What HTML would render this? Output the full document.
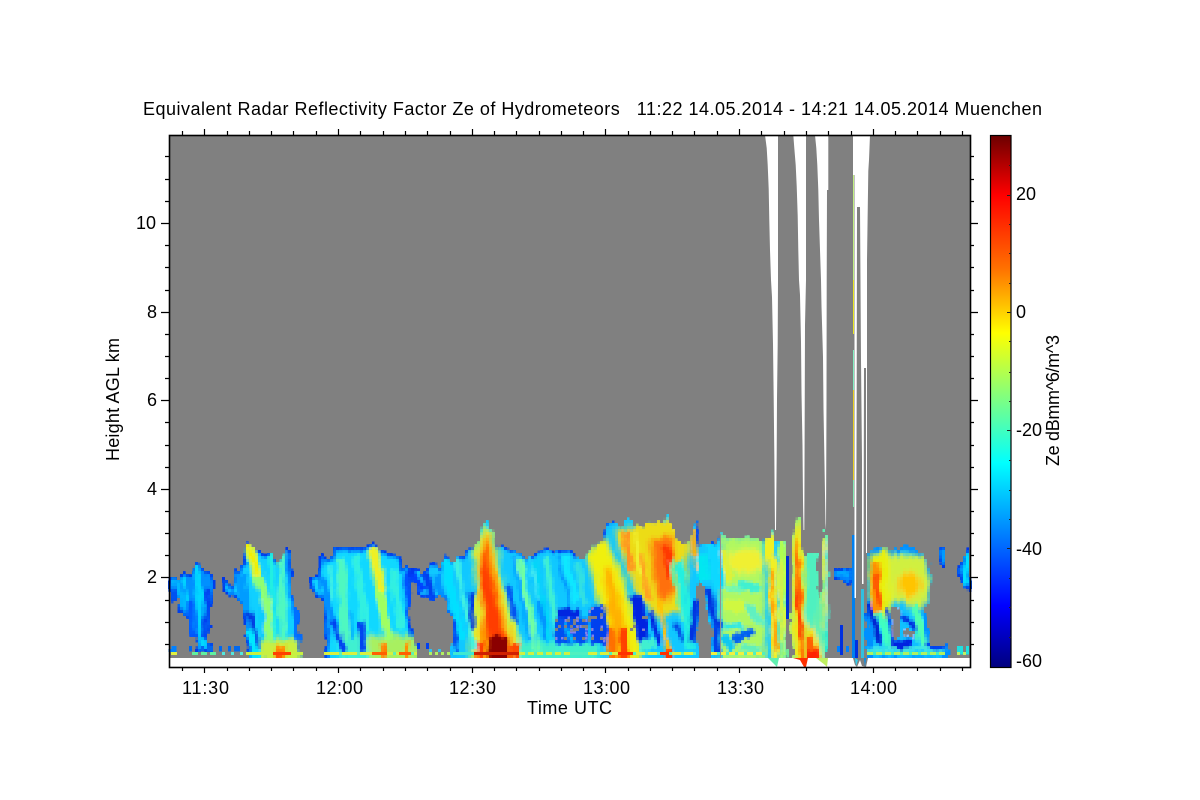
<!DOCTYPE html>
<html><head><meta charset="utf-8"><title>Radar</title>
<style>
html,body{margin:0;padding:0;background:#fff;width:1200px;height:800px;overflow:hidden}
svg{display:block}
text{font-family:"Liberation Sans",sans-serif;font-size:18px;fill:#000;white-space:pre}
</style></head><body>
<svg width="1200" height="800" viewBox="0 0 1200 800" xmlns="http://www.w3.org/2000/svg">
<defs>
<linearGradient id="jet" gradientUnits="userSpaceOnUse" x1="0" y1="135" x2="0" y2="667">
<stop offset="0" stop-color="#6b0000"/><stop offset=".113" stop-color="#ff0000"/><stop offset=".25" stop-color="#ff7000"/><stop offset=".372" stop-color="#ffff00"/><stop offset=".494" stop-color="#80ff80"/><stop offset=".617" stop-color="#00ffff"/><stop offset=".75" stop-color="#0080ff"/><stop offset=".885" stop-color="#0000ff"/><stop offset="1" stop-color="#00007f"/>
</linearGradient>
<filter id="b" filterUnits="userSpaceOnUse" x="160" y="500" width="820" height="180"><feGaussianBlur stdDeviation="2.6"/></filter>
<filter id="b2" filterUnits="userSpaceOnUse" x="160" y="500" width="820" height="180"><feGaussianBlur stdDeviation="1.1"/></filter>
<filter id="pix" filterUnits="userSpaceOnUse" primitiveUnits="userSpaceOnUse" x="165" y="505" width="810" height="170" color-interpolation-filters="sRGB">
<feTurbulence type="fractalNoise" baseFrequency="0.16 0.05" numOctaves="2" seed="4" result="n"/>
<feDisplacementMap in="SourceGraphic" in2="n" scale="9" xChannelSelector="R" yChannelSelector="G" result="d"/>
<feFlood x="166" y="506" width="1" height="1" flood-color="#000"/>
<feComposite x="165" y="505" width="3" height="3"/>
<feTile x="165" y="505" width="810" height="170" result="g"/>
<feComposite in="d" in2="g" operator="in"/>
<feMorphology operator="dilate" radius="1"/>
</filter>
<filter id="pix2" filterUnits="userSpaceOnUse" primitiveUnits="userSpaceOnUse" x="165" y="505" width="810" height="170" color-interpolation-filters="sRGB">
<feFlood x="166" y="506" width="1" height="1" flood-color="#000"/>
<feComposite x="165" y="505" width="3" height="3"/>
<feTile x="165" y="505" width="810" height="170" result="g"/>
<feComposite in="SourceGraphic" in2="g" operator="in"/>
<feMorphology operator="dilate" radius="1"/>
</filter>
<path id="a" d="M170 572L177 580L183 572L190 575L195 562L202 565L205 568L215 580L215 590L210 607L210 627L207 638L213 647L213 653L193 653L195 638L190 627L188 617L180 617L180 600L173 602L170 587Z"/>
<path id="c" d="M220 592L223 577L232 585L238 565L243 562L248 543L252 545L257 552L268 552L275 560L280 562L287 543L290 553L292 577L293 597L298 617L300 643L303 653L303 662L247 662L245 637L245 617L238 600L230 595Z"/>
<path id="d" d="M309 577L317 577L322 557L332 557L335 547L360 548L373 543L380 552L400 555L402 567L413 568L410 607L412 627L418 653L418 662L326 662L325 623L323 603L315 593L309 585Z"/>
<path id="m" d="M408 570L423 572L435 562L440 570L445 553L450 562L462 557L468 550L477 548L480 530L487 520L492 530L495 547L510 550L520 550L525 558L547 550L558 550L567 548L577 557L582 560L593 547L603 540L607 522L615 522L620 530L628 516L633 523L643 528L650 522L663 522L667 513L672 530L678 543L690 542L693 527L697 520L698 547L710 545L722 534L727 538L747 538L763 540L768 540L772 530L775 540L786 542L786 662L712 662L712 640L709 620L705 590L700 580L698 580L697 662L453 662L452 617L443 595L430 600L420 593Z"/>
<path id="p2" d="M792 600L792 540L797 517L800 517L803 560L808 553L817 553L818 600L822 620L822 550L825 530L827 530L828 640L827 662L806 662L792 662Z"/>
<path id="f" d="M867 575L868 553L878 545L887 550L897 550L908 545L918 552L930 562L932 580L930 600L927 610L927 643L947 646L947 662L867 662Z"/>
<path id="s1" d="M835 568L853 568L853 580L848 583L842 582L835 578Z"/>
<path id="s2" d="M938 553L943 545L947 555L946 568L942 568L938 560Z"/>
<path id="s3" d="M958 570L966 552L970 550L970 590L966 590L960 578Z"/>
<clipPath id="cl"><use href="#a"/><use href="#c"/><use href="#d"/><use href="#m"/><use href="#p2"/><use href="#f"/><use href="#s1"/><use href="#s2"/><use href="#s3"/></clipPath>
</defs>

<rect x="169" y="135" width="801" height="523" fill="#808080"/>

<g filter="url(#pix)">
<g clip-path="url(#cl)">
<use href="#a" fill="#0090ff"/><use href="#c" fill="#10d0ff"/><use href="#d" fill="#10d8ff"/><use href="#m" fill="#10c8ff"/><use href="#p2" fill="#60f0b0"/><use href="#f" fill="#10c0ff"/><use href="#s1" fill="#0070ff"/><use href="#s2" fill="#0070ff"/><use href="#s3" fill="#0090ff"/>
<!-- soft edges -->
<g filter="url(#b2)" fill="none">
<g stroke="#0090ff" stroke-width="9"><use href="#a"/><use href="#c"/><use href="#d"/><use href="#f"/><use href="#s1"/><use href="#s2"/><use href="#s3"/></g>
<g stroke="#0030e8" stroke-width="4"><use href="#a"/><use href="#c"/><use href="#d"/><use href="#s1"/><use href="#s2"/><use href="#s3"/></g>
<path d="M408 570L423 572L435 562L440 570L445 553L450 562L462 557L468 550L477 548M452 617L443 595L430 600L420 593L408 570M495 547L510 550L520 550L525 558L547 550L558 550L567 548L577 557M593 547L603 540L607 522L615 522M643 528L650 522L663 522M697 520L698 547M710 545L722 534M763 540L768 540" stroke="#0038f0" stroke-width="4"/>
</g>
<!-- large soft regions -->
<g filter="url(#b)">
<path d="M262 638L298 638L304 662L258 662Z" fill="#c8f040"/>
<path d="M366 636L418 636L422 662L362 662Z" fill="#a8f060"/>
<path d="M340 634L366 634L370 662L338 662Z" fill="#40f0d0"/>
<path d="M474 552L484 525L492 530L500 570L510 610L522 645L520 662L470 662L472 620L476 585Z" fill="#d8ff30"/>
<path d="M478 560L486 530L490 535L497 575L505 615L514 640L514 662L474 662L480 625L479 590Z" fill="#ff9800"/>
<path d="M480 570L487 538L491 570L503 625L510 640L488 640L482 610Z" fill="#ff3c00"/>
<path d="M518 642L600 642L600 662L518 662Z" fill="#40f0c8"/>
<path d="M586 555L604 535L624 578L642 650L640 662L612 662L600 605L592 575Z" fill="#f0f010"/>
<path d="M603 565L612 570L622 610L632 662L618 662L608 610Z" fill="#ffb000"/>
<path d="M614 532L640 522L675 518L690 545L682 612L656 618L636 592Z" fill="#ecdc18"/>
<path d="M650 540L673 535L677 590L662 605L654 582Z" fill="#ff7010"/>
<path d="M721 536L764 538L766 660L720 660Z" fill="#b0f860"/>
<ellipse cx="745" cy="561" rx="18" ry="12" fill="#f0f030"/>
<path d="M792 660L792 540L797 517L801 520L804 560L805 667L800 660Z" fill="#f8e810"/>
<path d="M806 612L818 610L828 655L828 667L806 660Z" fill="#60f0b0"/>
<path d="M806 625L814 625L824 660L806 660Z" fill="#f8e010"/>
<path d="M868 556L890 548L892 618L880 620L870 600Z" fill="#e8f010"/>
<path d="M890 555L925 555L932 580L926 610L890 600Z" fill="#d0f040"/>
<ellipse cx="909" cy="585" rx="12" ry="13" fill="#ffc400"/>
</g>
<g filter="url(#b2)" fill="none">
<!-- cloud A -->
<path d="M197 565L203 650" stroke="#00d8ff" stroke-width="6"/>
<path d="M175 578L185 610" stroke="#00b8ff" stroke-width="5"/>
<path d="M208 590L204 640" stroke="#0040f0" stroke-width="5"/>
<path d="M190 600L193 640" stroke="#0058ff" stroke-width="5"/>
<path d="M172 590L178 605" stroke="#0050f0" stroke-width="4"/>
<path d="M183 578L188 600" stroke="#00e0ff" stroke-width="3"/>
<!-- cloud B -->
<path d="M240 575L248 612" stroke="#009cff" stroke-width="10"/>
<path d="M250 612L258 650" stroke="#0030e0" stroke-width="5"/>
<path d="M249 545L258 575" stroke="#b0f850" stroke-width="11"/>
<path d="M249 545L258 575" stroke="#f0f000" stroke-width="6"/>
<path d="M258 575L266 605L272 640" stroke="#90ff70" stroke-width="10"/>
<path d="M270 555L276 640" stroke="#20f0e0" stroke-width="5"/>
<path d="M281 550L284 640" stroke="#50f8c0" stroke-width="7"/>
<path d="M262 600L264 640" stroke="#00c8ff" stroke-width="3"/>
<path d="M294 590L298 640" stroke="#0070ff" stroke-width="5"/>
<path d="M248 630L258 658" stroke="#00e8ff" stroke-width="7"/>
<path d="M280 645V660" stroke="#ff9000" stroke-width="12"/>
<path d="M278 650V660" stroke="#ff5000" stroke-width="6"/>
<!-- cloud C -->
<path d="M372 548L382 590" stroke="#b8f850" stroke-width="10"/>
<path d="M372 548L382 590" stroke="#f0f020" stroke-width="5"/>
<path d="M380 590L388 640" stroke="#a0ff60" stroke-width="9"/>
<path d="M340 558L346 640" stroke="#50f8c0" stroke-width="9"/>
<path d="M356 555L366 632" stroke="#30f0e0" stroke-width="7"/>
<path d="M322 578L336 630" stroke="#0090ff" stroke-width="7"/>
<path d="M332 620L345 652" stroke="#0040f0" stroke-width="6"/>
<path d="M361 622L363 650" stroke="#0040f0" stroke-width="5"/>
<path d="M350 610L352 640" stroke="#00b0ff" stroke-width="4"/>
<path d="M392 570L402 630" stroke="#30f0e0" stroke-width="7"/>
<path d="M406 572L411 625" stroke="#0050ff" stroke-width="5"/>
<path d="M330 565L334 600" stroke="#40f0e0" stroke-width="4"/>
<path d="M384 642V660" stroke="#ff8000" stroke-width="5"/>
<path d="M408 642V660" stroke="#ff9000" stroke-width="5"/>
<!-- cloud D -->
<path d="M425 572L433 598" stroke="#0040f0" stroke-width="8"/>
<path d="M412 575L424 590" stroke="#0040ff" stroke-width="6"/>
<path d="M445 560L462 640" stroke="#00e0ff" stroke-width="8"/>
<path d="M456 560L474 650" stroke="#40f0e0" stroke-width="5"/>
<path d="M471 590L473 630" stroke="#0030e0" stroke-width="5"/>
<path d="M454 620L458 656" stroke="#0040f0" stroke-width="4"/>
<path d="M436 575L448 615" stroke="#0090ff" stroke-width="5"/>
<!-- E lower -->
<path d="M480 642V660" stroke="#ff4000" stroke-width="9"/>
<path d="M515 644V660" stroke="#ff4800" stroke-width="10"/>
<path d="M499 636V662" stroke="#8b0000" stroke-width="20"/>
<!-- 510-600 field -->
<path d="M508 585L516 625" stroke="#0050f0" stroke-width="5"/>
<path d="M520 558L536 652" stroke="#70ffa0" stroke-width="6"/>
<path d="M514 556L530 640" stroke="#00a8ff" stroke-width="4"/>
<path d="M535 558L550 640" stroke="#00d8f8" stroke-width="5"/>
<path d="M546 558L560 652" stroke="#40f0d0" stroke-width="6"/>
<path d="M540 600L546 640" stroke="#0090ff" stroke-width="4"/>
<path d="M530 556L538 600" stroke="#40e8f0" stroke-width="4"/>
<path d="M558 555L570 610" stroke="#0090ff" stroke-width="3"/>
<path d="M565 555L576 602" stroke="#10e8ff" stroke-width="6"/>
<path d="M578 562L585 605" stroke="#30e0e0" stroke-width="5"/>
<path d="M557 609H578V618H557Z" fill="#0028e0"/>
<path d="M555 618H587V644H555Z" fill="#0050f0"/>
<path d="M565 622L572 642" stroke="#00c0ff" stroke-width="4"/>
<!-- warm band -->
<path d="M612 628V660" stroke="#ff7000" stroke-width="8"/>
<path d="M624 628V660" stroke="#ff4000" stroke-width="9"/>
<path d="M590 606H607V645H590Z" fill="#0040ee"/>
<path d="M636 596L644 640" stroke="#0020e0" stroke-width="12"/>
<path d="M625 530L631 572" stroke="#ff9020" stroke-width="6"/>
<path d="M640 555L650 600" stroke="#ffa020" stroke-width="5"/>
<path d="M635 530L640 575" stroke="#f0f030" stroke-width="4"/>
<path d="M665 545L670 578" stroke="#ff3800" stroke-width="8"/>
<path d="M660 600L668 656" stroke="#ffc000" stroke-width="4"/>
<path d="M650 610L660 645" stroke="#0020e0" stroke-width="5"/>
<path d="M693 530L696 572" stroke="#ffb000" stroke-width="4"/>
<path d="M680 560L690 650" stroke="#20f0e0" stroke-width="8"/>
<path d="M672 560L682 620" stroke="#60f0a0" stroke-width="4"/>
<path d="M696 600L692 642" stroke="#0030e0" stroke-width="7"/>
<path d="M675 622L683 642" stroke="#0030e0" stroke-width="3"/>
<path d="M668 650V660" stroke="#ff3000" stroke-width="6"/>
<path d="M640 645L655 645" stroke="#40f0d0" stroke-width="10"/>
<!-- right of 697 -->
<path d="M700 555L704 580" stroke="#00e8f0" stroke-width="12"/>
<path d="M708 588L717 628" stroke="#0030e0" stroke-width="6"/>
<path d="M714 625L718 656" stroke="#0040e8" stroke-width="6"/>
<path d="M712 545L720 590" stroke="#10d8ff" stroke-width="12"/>
<path d="M722 550L730 580" stroke="#e0f030" stroke-width="6"/>
<path d="M738 583L760 590" stroke="#40f0d0" stroke-width="9"/>
<path d="M728 588L740 590" stroke="#70f8b0" stroke-width="6"/>
<path d="M724 606L744 606" stroke="#d0f840" stroke-width="12"/>
<path d="M748 605L762 625" stroke="#60f0c0" stroke-width="9"/>
<path d="M722 624L745 628" stroke="#30e8e0" stroke-width="6"/>
<path d="M722 635L734 650" stroke="#10c8f0" stroke-width="9"/>
<path d="M734 640L754 630" stroke="#0060f0" stroke-width="8"/>
<path d="M740 648L762 650" stroke="#60f0b8" stroke-width="7"/>
<path d="M766 540L772 530L776 560L779 667L772 660Z" fill="#f0f020"/>
<path d="M771 570L774 620L776 650" stroke="#ff9000" stroke-width="3"/>
<path d="M778 540L786 540L786 658L780 658Z" fill="#b0ff50"/>
<path d="M779 560L783 640" stroke="#e0f040" stroke-width="3"/>
<!-- p2 -->
<path d="M795 600L796 535L799 555L802 600L804 667L800 655Z" fill="#ff7000"/>
<path d="M797 590L802 640" stroke="#ff3000" stroke-width="3"/>
<path d="M808 553L818 553L818 605L808 630Z" fill="#50f0c0"/>
<path d="M806 636L812 636L820 658L806 660Z" fill="#ff6000"/>
<path d="M806 650L818 650L820 660L806 660Z" fill="#ff2000"/>
<path d="M823 535L826 630" stroke="#e8e820" stroke-width="3"/>
<path d="M826 540L827 660" stroke="#00e0e0" stroke-width="2"/>
<!-- s1 -->
<path d="M838 573L850 574" stroke="#00a8ff" stroke-width="5"/>
<!-- cloud F -->
<path d="M875 562L878 612" stroke="#ff9000" stroke-width="10"/>
<path d="M875 575L880 605" stroke="#ff4800" stroke-width="5"/>
<path d="M868 603L880 645" stroke="#0020d0" stroke-width="6"/>
<path d="M880 612L892 652" stroke="#40ffc0" stroke-width="7"/>
<path d="M915 605L925 652" stroke="#50ffb0" stroke-width="7"/>
<path d="M890 644L912 644" stroke="#0020e0" stroke-width="8"/>
<path d="M902 615L915 628" stroke="#0030e0" stroke-width="6"/>
<path d="M888 610L892 640" stroke="#0038e8" stroke-width="3"/>
<path d="M868 650L945 650" stroke="#40e8e0" stroke-width="4"/>
<path d="M925 645L945 648" stroke="#0040f0" stroke-width="5"/>
<path d="M943 550V565" stroke="#00a0ff" stroke-width="3"/>
<path d="M966 555V585" stroke="#00e0ff" stroke-width="5"/>
</g>
<!-- speckle holes -->
<g fill="none" stroke="#808080" stroke-width="3">
<path d="M555 620H586" stroke-dasharray="3 6 6 4 3 7"/><path d="M555 626H586" stroke-dasharray="6 3 3 6 4 4"/><path d="M556 632H586" stroke-dasharray="3 7 3 3 6 5"/><path d="M555 638H586" stroke-dasharray="3 4 6 6"/>
<path d="M590 609H606" stroke-dasharray="3 6 5 2"/><path d="M590 618H606" stroke-dasharray="6 4 3"/><path d="M590 628H606" stroke-dasharray="3 7"/><path d="M590 638H606" stroke-dasharray="6 4"/>
<path d="M632 618H650" stroke-dasharray="3 8 4 3"/><path d="M632 630H650" stroke-dasharray="5 4 3 6"/>
</g>
<path d="M892 607L900 607L901 637L893 640Z M904 630L915 630L915 637L905 637Z" fill="#808080"/>
</g>
</g>

<g filter="url(#pix2)" fill="none">
<path d="M787 555V620" stroke="#0030d0" stroke-width="3"/>
<path d="M853.5 535V657" stroke="#0080f0" stroke-width="3"/>
<path d="M862 590V657" stroke="#30c0e0" stroke-width="3"/>
<path d="M856 640V657" stroke="#0030e0" stroke-width="3"/>
<path d="M841 625V655" stroke="#0030e0" stroke-width="3"/>
<path d="M838 650H850" stroke="#0080ff" stroke-width="6" stroke-dasharray="3 6"/>
<path d="M171 648V651M174 646V651" stroke="#0080ff" stroke-width="3"/>
<path d="M190 648H246" stroke="#0068f0" stroke-width="5" stroke-dasharray="3 7 3 4 6 5"/>
<path d="M428 651H448" stroke="#30c0f0" stroke-width="4" stroke-dasharray="3 6"/>
<path d="M418 646H430" stroke="#0040f0" stroke-width="6" stroke-dasharray="3 4"/>
<path d="M958 650H970" stroke="#20e0e0" stroke-width="7" stroke-dasharray="4 3"/>
<g stroke-width="1">
<path d="M171 653.5H176" stroke="#e0f040"/>
<path d="M193 653.5H218" stroke="#60f0a0" stroke-dasharray="6 3"/>
<path d="M222 653.5H246" stroke="#50e8e0" stroke-dasharray="3 6"/>
<path d="M247 653.5H303" stroke="#c8f040"/>
<path d="M272 653.5H292" stroke="#ff4000"/>
<path d="M323 653.5H418" stroke="#60f0b0"/>
<path d="M323 653.5H418" stroke="#d8f040" stroke-dasharray="15 3"/>
<path d="M372 653.5H388M400 653.5H410" stroke="#ff6000"/>
<path d="M430 653.5H470" stroke="#b0f060" stroke-dasharray="3 3"/>
<path d="M453 653.5H475" stroke="#40e8d0"/>
<path d="M475 653.5H520" stroke="#d02000"/>
<path d="M520 653.5H697" stroke="#50f0c0"/>
<path d="M520 653.5H570" stroke="#d0f040" stroke-dasharray="6 3"/>
<path d="M587 653.5H697" stroke="#d8f040" stroke-dasharray="9 3"/>
<path d="M618 653.5H632M660 653.5H668" stroke="#ff3000"/>
<path d="M712 653.5H766" stroke="#50f0c0"/>
<path d="M712 653.5H766" stroke="#f0f040" stroke-dasharray="6 3"/>
<path d="M868 653.5H946" stroke="#40f0c0"/>
<path d="M868 653.5H946" stroke="#b0f060" stroke-dasharray="6 3"/>
<path d="M958 653.5H968" stroke="#c0f060" stroke-dasharray="3 3"/>
</g>
</g>

<path d="M720.5 534V658" stroke="#909090" stroke-width="1" fill="none"/>
<g fill="none">
<path d="M853.5 175V280" stroke="#c0f080" stroke-width="1"/>
<path d="M853.5 280V334" stroke="#e8e820" stroke-width="1"/>
<path d="M853.5 350V390" stroke="#80f0c0" stroke-width="1"/>
<path d="M853.5 390V480" stroke="#e8d020" stroke-width="1"/>
<path d="M853.5 480V507" stroke="#80e8b0" stroke-width="1"/>
</g>

<!-- white bottom strip, then wedges -->
<path d="M170 658H970V667H170Z" fill="#fff"/>
<path d="M768 658L775 665L777 667L779 658Z" fill="#60f0b0"/>
<path d="M793 658L800 660L804 667L806 667L808 658Z" fill="#ff3000"/>
<path d="M808 658L816 658L825 665L827 667L828 658Z" fill="#c0f060"/>
<path d="M853 658L855 665L857 667L860 660L862 666L866 667L868 658Z" fill="#808080"/>
<path d="M855 658L856 666L858 660Z" fill="#30d0f0"/>
<path d="M864 658L865 667L866 658Z" fill="#0090f0"/>

<!-- white gaps -->
<g fill="#fff">
<path d="M765 135L778 135L778 280L777.7 344L777 399L776.7 454L776 530L775 530L774.3 454L773.7 399L773 344L772 297L771 280L770 250L769.3 220L768.7 189L767.7 165L766.7 148Z"/>
<path d="M793.3 135L806 135L806 280L805 325L804.3 530L803.5 530L803 500L802.5 446L801.5 393L801 342L800 295L799 280L798.3 250L797.7 216L796.7 186L795.7 165L794.3 148Z"/>
<path d="M815 135L828.3 135L828.3 190L827 190L826.7 280L826.5 400L826 530L825.5 523L824.5 465L823.5 409L823 357L821.5 306L821 280L820 250L819 220L818.3 190L817.3 165L816.3 148Z"/>
<path d="M853 135L870 135L869 160L868.3 171L867 260L867 553L866 553L866 368L864 368L863.5 584L862 584L862 460L861 360L860 207L857 207L856.7 388L856 598L854.5 598L854.5 175L853 175Z"/>
</g>

<!-- axes -->
<g fill="none" stroke="#000" stroke-width="1.2">
<path d="M204.5 667V673M338.5 667V673M472.5 667V673M605.5 667V673M739.5 667V673M873.5 667V673"/>
<path d="M182.5 667V671M227.5 667V671M249.5 667V671M271.5 667V671M293.5 667V671M316.5 667V671M360.5 667V671M383.5 667V671M405.5 667V671M427.5 667V671M450.5 667V671M494.5 667V671M516.5 667V671M539.5 667V671M561.5 667V671M583.5 667V671M628.5 667V671M650.5 667V671M672.5 667V671M694.5 667V671M717.5 667V671M761.5 667V671M784.5 667V671M806.5 667V671M828.5 667V671M851.5 667V671M895.5 667V671M917.5 667V671M940.5 667V671M962.5 667V671"/>
<path d="M204.5 135V129M338.5 135V129M472.5 135V129M605.5 135V129M739.5 135V129M873.5 135V129"/>
<path d="M182.5 135V131M227.5 135V131M249.5 135V131M271.5 135V131M293.5 135V131M316.5 135V131M360.5 135V131M383.5 135V131M405.5 135V131M427.5 135V131M450.5 135V131M494.5 135V131M516.5 135V131M539.5 135V131M561.5 135V131M583.5 135V131M628.5 135V131M650.5 135V131M672.5 135V131M694.5 135V131M717.5 135V131M761.5 135V131M784.5 135V131M806.5 135V131M828.5 135V131M851.5 135V131M895.5 135V131M917.5 135V131M940.5 135V131M962.5 135V131"/>
<path d="M161 223.5H169M161 312.5H169M161 400.5H169M161 489.5H169M161 577.5H169"/>
<path d="M165 156.5H169M165 179.5H169M165 201.5H169M165 245.5H169M165 267.5H169M165 290.5H169M165 334.5H169M165 356.5H169M165 378.5H169M165 422.5H169M165 445.5H169M165 467.5H169M165 511.5H169M165 533.5H169M165 555.5H169M165 600.5H169M165 622.5H169M165 644.5H169"/>
<path d="M970 223.5H978M970 312.5H978M970 400.5H978M970 489.5H978M970 577.5H978"/>
<path d="M970 156.5H974M970 179.5H974M970 201.5H974M970 245.5H974M970 267.5H974M970 290.5H974M970 334.5H974M970 356.5H974M970 378.5H974M970 422.5H974M970 445.5H974M970 467.5H974M970 511.5H974M970 533.5H974M970 555.5H974M970 600.5H974M970 622.5H974M970 644.5H974"/>
</g>
<rect x="169.5" y="135.5" width="801" height="532" fill="none" stroke="#000" stroke-width="1.6"/>

<!-- colorbar -->
<rect x="990.5" y="135.5" width="20.5" height="532" fill="url(#jet)" stroke="#000" stroke-width="1.2"/>
<path d="M1009 165.5H1011M1007 195.5H1011M1009 224.5H1011M1009 253.5H1011M1009 283.5H1011M1007 312.5H1011M1009 341.5H1011M1009 372.5H1011M1009 401.5H1011M1007 430.5H1011M1009 460.5H1011M1009 490.5H1011M1009 519.5H1011M1007 548.5H1011M1009 578.5H1011M1009 607.5H1011M1009 637.5H1011" fill="none" stroke="#222" stroke-width="1"/>

<!-- text -->
<text x="143" y="115" textLength="899">Equivalent Radar Reflectivity Factor Ze of Hydrometeors   11:22 14.05.2014 - 14:21 14.05.2014 Muenchen</text>
<text x="136" y="229" textLength="20">10</text>
<text x="147" y="318">8</text>
<text x="147" y="406">6</text>
<text x="147" y="495">4</text>
<text x="147" y="583">2</text>
<text x="182" y="694" textLength="47">11:30</text>
<text x="316" y="694" textLength="47">12:00</text>
<text x="449" y="694" textLength="47">12:30</text>
<text x="583" y="694" textLength="47">13:00</text>
<text x="717" y="694" textLength="47">13:30</text>
<text x="850" y="694" textLength="47">14:00</text>
<text x="527" y="714" textLength="85">Time UTC</text>
<text transform="translate(119,461) rotate(-90)" textLength="123">Height AGL km</text>
<text x="1016" y="200" textLength="20">20</text>
<text x="1016" y="318">0</text>
<text x="1016" y="436" textLength="26">-20</text>
<text x="1016" y="555" textLength="26">-40</text>
<text x="1016" y="667" textLength="26">-60</text>
<text transform="translate(1059,466) rotate(-90)" textLength="131">Ze dBmm^6/m^3</text>
</svg>
</body></html>
